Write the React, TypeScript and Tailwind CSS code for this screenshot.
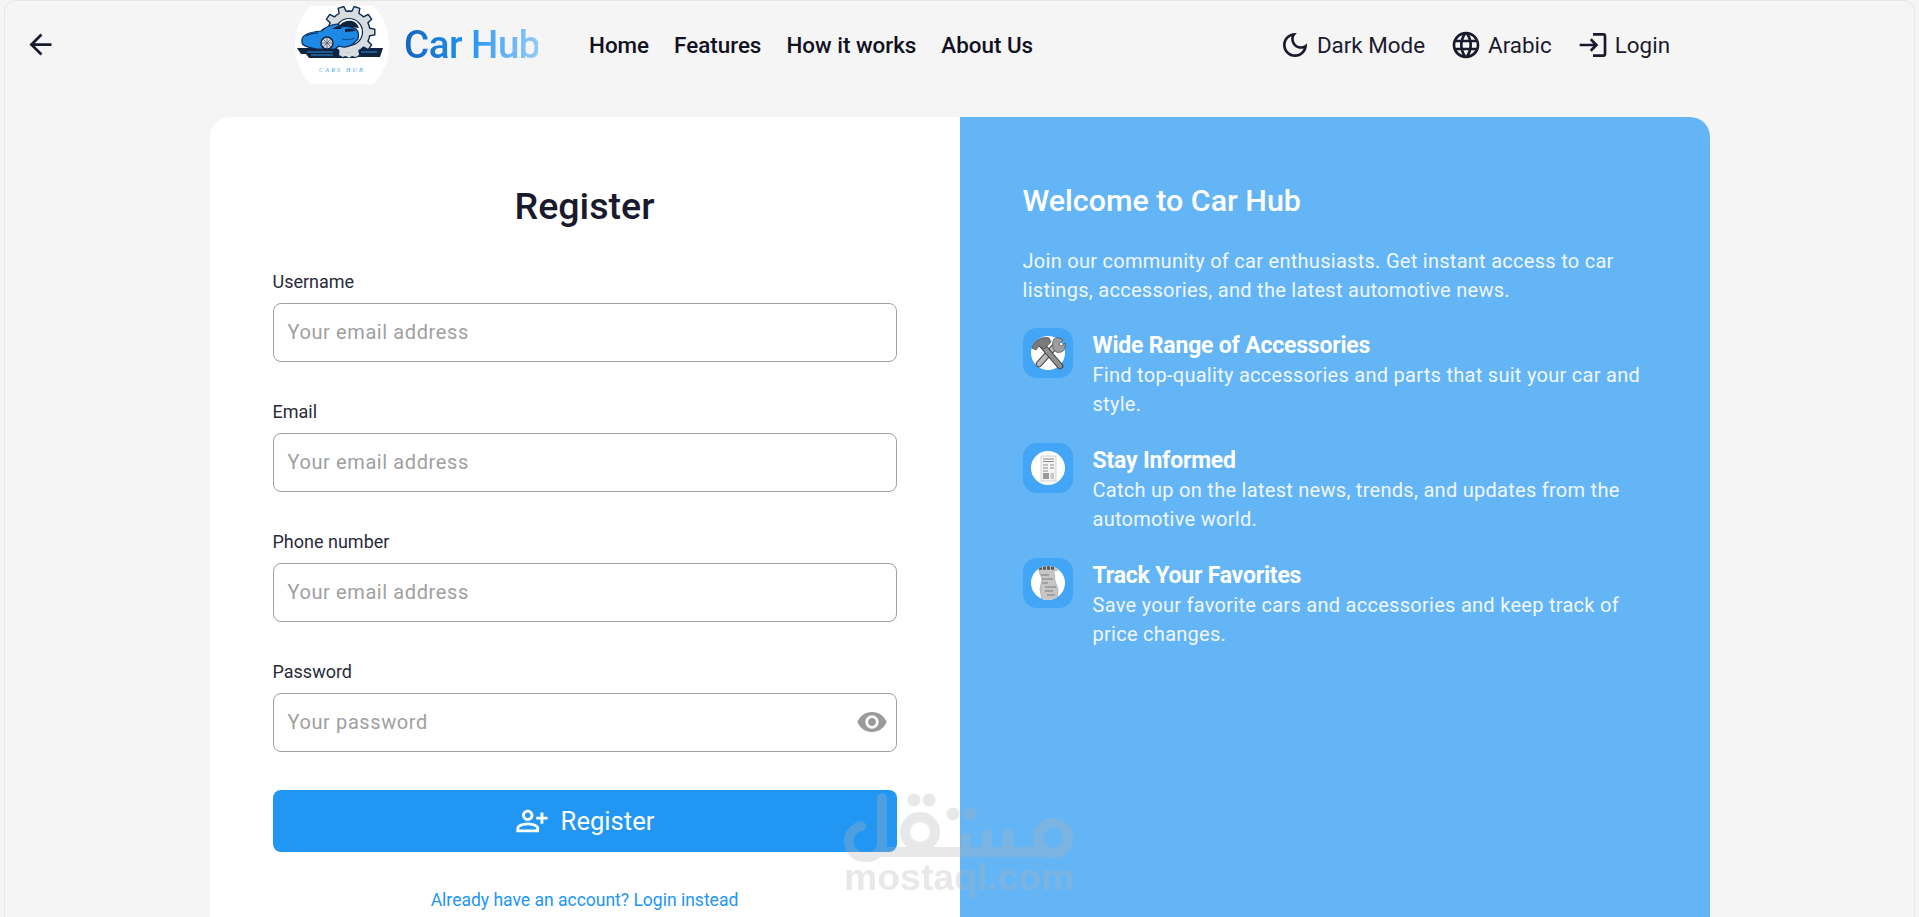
import React from 'react';
import { MdArrowBack, MdOutlineDarkMode, MdLanguage, MdLogin, MdVisibility, MdOutlinePersonAddAlt } from 'react-icons/md';

const font = { fontFamily: 'Roboto, sans-serif' };

// gear outline with 10 teeth, centred on the logo's cog
const gearPoints = () => {
  const pts: string[] = [];
  const teeth = 10;
  for (let i = 0; i < teeth; i++) {
    const a = (i / teeth) * Math.PI * 2;
    const step = (Math.PI * 2) / teeth;
    [
      [a - step * 0.5, 21],
      [a - step * 0.28, 21],
      [a - step * 0.18, 26],
      [a + step * 0.18, 26],
      [a + step * 0.28, 21],
    ].forEach(([t, r]) => {
      pts.push(`${(54 + r * Math.cos(t)).toFixed(1)},${(26 + r * Math.sin(t)).toFixed(1)}`);
    });
  }
  return pts.join(' ');
};

const CarLogo = () => (
  <svg viewBox="0 0 94 78" className="w-[94px] h-[78px] block">
    <defs>
      <clipPath id="logoClip">
        <ellipse cx="47" cy="39" rx="47" ry="52" />
      </clipPath>
    </defs>
    <rect width="94" height="78" fill="#fff" clipPath="url(#logoClip)" />
    {/* speed lines behind the car */}
    <path d="M2 42h86l-3 9H62l-4 1H14l-3-4H6z" fill="#12233f" />
    <path d="M12 46h26M16 49h22M66 46h16" stroke="#2b8fe0" strokeWidth="1.1" />
    {/* gear */}
    <polygon points={gearPoints()} fill="#d9dcdf" stroke="#0b2a52" strokeWidth="1.4" strokeLinejoin="round" />
    <circle cx="54" cy="26" r="13.5" fill="#fff" stroke="#0b2a52" strokeWidth="1.2" />
    <path d="M44 20c3-4 8-6 13-5 4 1 6 4 7 7z" fill="#12233f" />
    {/* car */}
    <path d="M7 33c1-5 9-7 19-8 5-4 11-7 17-7l3 3c4-1 10-1 15 2 2 2 3 6 2 10l-5 5c-4 3-10 4-14 2l-4 3H22c-6-1-14-2-15-6z" fill="#1e88e5" stroke="#0b2a52" strokeWidth="1.2" strokeLinejoin="round" />
    <path d="M37 23c3-2 7-4 10-4l-1 4z" fill="#12233f" />
    <path d="M50 23c4-1 9-1 11 2l-11 1z" fill="#12233f" />
    <path d="M11 30c4-2 8-3 12-3" stroke="#0b2a52" strokeWidth="1" fill="none" />
    <path d="M47 33c3 1 8 1 13-1" stroke="#0b4c8a" strokeWidth="1" fill="none" />
    {/* gear part in front of the car */}
    <path d="M44 44c5 3 12 3 17 0l3 4-3 3-4-1-3 2-3-2-4 1z" fill="#d9dcdf" />
    <circle cx="32" cy="37" r="6" fill="#d4d8dc" stroke="#12233f" strokeWidth="1.4" />
    <path d="M32 31v12M26 37h12M28 33l8 8M36 33l-8 8" stroke="#55606a" strokeWidth="0.8" />
    <text x="47" y="66" textAnchor="middle" fontSize="6" letterSpacing="2.2" fontStyle="italic" fill="#42a5f5" fontFamily="Liberation Serif, serif">CARS HUB</text>
  </svg>
);

const ToolsIcon = () => (
  <svg viewBox="0 0 36 36" className="w-9 h-9 overflow-visible">
    <circle cx="18" cy="18" r="17" fill="#fff" />
    {/* wrench */}
    <path d="M26 10L9 29" stroke="#4a4a4a" strokeWidth="6.5" strokeLinecap="round" />
    <path d="M26 10L9 29" stroke="#b9b9b9" strokeWidth="4.5" strokeLinecap="round" />
    <path d="M24 4c3-2 7-1 9 1l-4 4 2 2 4-3c1 3 0 6-2 8-3 2-6 2-8 0-3-3-3-9-1-12z" fill="#9d9d9d" stroke="#4a4a4a" strokeWidth="0.7" />
    {/* hammer */}
    <path d="M12 10l18 21" stroke="#3f3f3f" strokeWidth="6.5" strokeLinecap="round" />
    <path d="M12 10l18 21" stroke="#8f8f8f" strokeWidth="4.5" strokeLinecap="round" />
    <path d="M2 13C4 6 11 1 19 3l2 4-7 7-5-3-3 4z" fill="#7a7a7a" stroke="#3f3f3f" strokeWidth="0.7" />
  </svg>
);

const NewsIcon = () => (
  <svg viewBox="0 0 36 36" className="w-9 h-9">
    <circle cx="18" cy="18" r="17" fill="#fff" />
    <rect x="11" y="6" width="15" height="25" fill="#f4f4f4" stroke="#bcbcbc" strokeWidth="0.6" />
    <path d="M13 9h11M13 11.5h11M13 15h5M20 15h4M13 18h5M20 18h4M13 21h5" stroke="#8c8c8c" strokeWidth="1" />
    <rect x="13" y="23" width="6" height="6" fill="#9a9a9a" />
    <path d="M20.5 24h3.5M20.5 26h3.5M20.5 28h3.5" stroke="#9a9a9a" strokeWidth="1" />
  </svg>
);

const ReceiptIcon = () => (
  <svg viewBox="0 0 36 36" className="w-9 h-9">
    <defs>
      <clipPath id="rcptClip">
        <circle cx="18" cy="18" r="17" />
      </clipPath>
    </defs>
    <circle cx="18" cy="18" r="17" fill="#fff" />
    <g clipPath="url(#rcptClip)">
      <path d="M8 0h22l2 4-8 2 1 10 3 8-1 12H12l-2-12 2-10-3-8z" fill="#c6c6c6" stroke="#8a8a8a" strokeWidth="0.5" />
      <path d="M9 3h16" stroke="#555" strokeWidth="3.5" strokeDasharray="3 1" />
      <path d="M11 10h8M12 14h11M12 18h6M15 22h11M15 26h8M17 30h8" stroke="#7a7a7a" strokeWidth="1.2" />
    </g>
  </svg>
);

const features = [
  {
    title: 'Wide Range of Accessories',
    text: 'Find top-quality accessories and parts that suit your car and style.',
    icon: <ToolsIcon />,
  },
  {
    title: 'Stay Informed',
    text: 'Catch up on the latest news, trends, and updates from the automotive world.',
    icon: <NewsIcon />,
  },
  {
    title: 'Track Your Favorites',
    text: 'Save your favorite cars and accessories and keep track of price changes.',
    icon: <ReceiptIcon />,
  },
];

const fields = [
  { label: 'Username', placeholder: 'Your email address' },
  { label: 'Email', placeholder: 'Your email address' },
  { label: 'Phone number', placeholder: 'Your email address' },
  { label: 'Password', placeholder: 'Your password', password: true },
];

const Watermark = () => (
  <div className="absolute left-[844px] top-[790px] w-[232px] flex flex-col items-start opacity-[0.3] pointer-events-none">
    <svg viewBox="0 0 232 76" className="w-[232px] h-[76px] block">
      <g fill="none" stroke="#b4b4b4" strokeWidth="10" strokeLinecap="round">
        <path d="M38 8v44c0 11-8 15-16 15C11 67 5 60 5 51c0-8 5-13 12-15" />
        <circle cx="76" cy="42" r="15" />
        <path d="M38 62h165" />
        <path d="M122 62V48M143 62V44M164 62V44" />
        <circle cx="209" cy="48" r="15" />
      </g>
      <g fill="#b4b4b4">
        <circle cx="70" cy="10" r="6.5" />
        <circle cx="85" cy="10" r="6.5" />
        <circle cx="109" cy="24" r="6.5" />
        <circle cx="126" cy="24" r="6.5" />
      </g>
    </svg>
    <span className="-mt-[4px] text-[37.4px] leading-[30px] font-bold text-[#b4b4b4]" style={{ fontFamily: '"Liberation Sans", sans-serif' }}>
      mostaql.com
    </span>
  </div>
);

export default function App() {
  return (
    <div className="relative h-[917px] overflow-hidden bg-[#f5f5f5] text-[#1a1a2e]" style={font}>
      <header className="h-[90px] flex items-center">
        <button className="ml-[24px] w-[33px] mb-[2px]">
          <MdArrowBack size={33} />
        </button>
        <div className="ml-[238px] flex items-center">
          <CarLogo />
          <span className="ml-[15px] w-[134px] text-[38.5px] font-medium leading-none tracking-[-0.5px] bg-gradient-to-r from-[#1565c0] via-[#2196f3] to-[#90caf9] bg-clip-text text-transparent whitespace-nowrap">
            Car Hub
          </span>
        </div>
        <nav className="ml-[51px] pt-[2px] flex items-center gap-[25px] text-[22.4px] font-medium text-[#111122] whitespace-nowrap">
          <span>Home</span>
          <span>Features</span>
          <span>How it works</span>
          <span>About Us</span>
        </nav>
        <div className="ml-auto mr-[249px] flex items-center gap-[25px] text-[22.4px] text-[#1a1a2e] whitespace-nowrap">
          <span className="flex items-center gap-[6px]">
            <MdOutlineDarkMode size={32} />
            <span className="pt-[2px]">Dark Mode</span>
          </span>
          <span className="flex items-center gap-[6px]">
            <MdLanguage size={32} />
            <span className="pt-[2px]">Arabic</span>
          </span>
          <span className="flex items-center gap-[6px]">
            <MdLogin size={32} />
            <span className="pt-[2px]">Login</span>
          </span>
        </div>
      </header>

      <main className="mt-[27px] mx-auto w-[1500px] grid grid-cols-2 rounded-[20px] overflow-hidden">
        <section className="bg-white px-[63px] pt-[65px] pb-10 h-[820px]">
          <h1 className="text-[37.6px] leading-[48px] font-medium text-center">Register</h1>
          <form className="mt-[40px] flex flex-col gap-[38px]">
            {fields.map((f) => (
              <div key={f.label}>
                <label className="block text-[18px] leading-[24px] mb-[9px] text-[#2a2a3a]">{f.label}</label>
                <div className="h-[59px] border border-[#a0a0a0] rounded-[8px] pl-[14px] pr-[8px] pb-[2px] flex items-center justify-between">
                  <span className="text-[20px] tracking-[0.6px] text-[#a0a0a0]">{f.placeholder}</span>
                  {f.password && <MdVisibility size={32} className="text-[#9a9a9a]" />}
                </div>
              </div>
            ))}
          </form>
          <button className="mt-[38px] w-full h-[62px] rounded-[8px] bg-[#2196f3] text-white text-[25.6px] flex items-center justify-center gap-[12px]">
            <MdOutlinePersonAddAlt size={34} />
            Register
          </button>
          <p className="mt-[36px] text-center text-[17.5px] leading-[24px] text-[#2196f3]">Already have an account? Login instead</p>
        </section>

        <section className="bg-[#64b5f6] px-[63px] pt-[63px] text-white">
          <h2 className="text-[30.4px] leading-[42px] font-medium">Welcome to Car Hub</h2>
          <p className="mt-[25px] text-[20px] tracking-[0.28px] leading-[29px] text-[#f0f7fe]">
            Join our community of car enthusiasts. Get instant access to car listings, accessories, and the latest automotive news.
          </p>
          <div className="mt-[23px] flex flex-col gap-[24px]">
            {features.map((f) => (
              <div key={f.title} className="flex gap-[20px]">
                <div className="w-[50px] h-[50px] shrink-0 rounded-[14px] bg-[#42a5f5] flex items-center justify-center">
                  {f.icon}
                </div>
                <div className="pt-[2px]">
                  <h3 className="text-[23px] leading-[31px] font-bold tracking-[-0.2px]">{f.title}</h3>
                  <p className="text-[20px] tracking-[0.28px] leading-[29px] text-[#f0f7fe]">{f.text}</p>
                </div>
              </div>
            ))}
          </div>
        </section>
      </main>

      <Watermark />
      <div className="absolute inset-0 pointer-events-none border-x border-t border-[#e6e6e6] rounded-t-[12px] mx-[4px]" />
    </div>
  );
}
